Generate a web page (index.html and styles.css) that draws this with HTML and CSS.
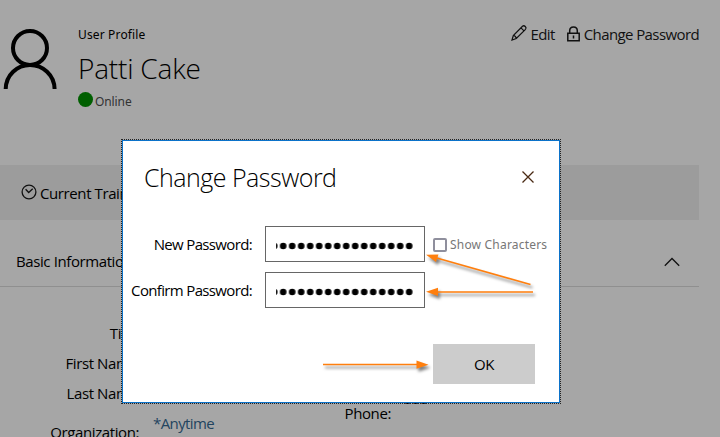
FILE: index.html
```html
<!DOCTYPE html>
<html lang="en">
<head>
<meta charset="utf-8">
<title>User Profile</title>
<link rel="stylesheet" href="styles.css">
</head>
<body>
<main class="page">
  <header class="profile">
    <svg class="avatar" width="60" height="64" viewBox="0 0 60 64" fill="none" stroke="#000" stroke-width="4"><circle cx="30" cy="21" r="17"/><path d="M5.700 62C6 48 17 38 30 38s24.300 10 24.600 24"/></svg>
    <div class="identity">
      <div class="kicker">User Profile</div>
      <h1 class="name">Patti Cake</h1>
      <div class="status"><span class="dot"></span><span class="online">Online</span></div>
    </div>
    <nav class="actions">
      <a class="action"><svg width="18" height="18" viewBox="0 0 18 18" fill="none" stroke="#111" stroke-width="1.200"><path d="M2 16l1.300-4.500L12.500 2.300c1.800-1.600 4.600 1.200 3 3L6.300 14.500zM3.300 11.500c1.500.2 2.700 1.300 3 3M11 3.800l3 3"/></svg><span class="edit">Edit</span></a>
      <a class="action lock"><svg width="13" height="16" viewBox="0 0 13 16" fill="none" stroke="#111" stroke-width="1.500"><path d="M.8 7.200h11.400v7.600H.8zM2.700 7V4.800c0-5 7.600-5 7.600 0V7M6.500 9.500v3"/></svg><span class="change">Change Password</span></a>
    </nav>
  </header>
  <section class="tabbar"><svg width="16" height="16" viewBox="0 0 16 16" fill="none" stroke="#111" stroke-width="1.300"><circle cx="8" cy="8" r="6.900"/><path d="M4.600 5.200L7.700 8.500 11.700 4.800"/></svg><span>Current Training</span></section>
  <section class="section-head"><span>Basic Information</span><svg width="16" height="10" viewBox="0 0 16 10" fill="none" stroke="#111" stroke-width="1.300"><path d="M.8 8.700L8 1.500l7.200 7.200"/></svg></section>
  <section class="details">
    <div class="labels">
      <div>Title:</div><div>First Name:</div><div>Last Name:</div><div class="org">Organization:</div>
    </div>
    <a class="org-link">*Anytime</a>
    <div class="phone">Phone:</div>
    <div class="number">555</div>
  </section>
</main>
<div class="dialog" role="dialog">
  <div class="dialog-head"><h2>Change Password</h2><svg width="12" height="12" viewBox="0 0 12 12" stroke="#4a2a14" stroke-width="1.300"><path d="M.5.500l11 11M11.500.500l-11 11"/></svg></div>
  <div class="row">
    <label>New Password:</label>
    <div class="field"><svg width="138" height="8" viewBox="0 0 138 8"><defs><pattern id="dots" x="2.700" width="9" height="8" patternUnits="userSpaceOnUse"><circle cx="4.500" cy="4" r="3.300"/></pattern></defs><rect width="138" height="8" fill="url(#dots)"/></svg></div>
    <div class="show"><span class="box"></span><span>Show Characters</span></div>
  </div>
  <div class="row">
    <label>Confirm Password:</label>
    <div class="field"><svg width="138" height="8" viewBox="0 0 138 8"><rect width="138" height="8" fill="url(#dots)"/></svg></div>
  </div>
  <button class="ok">OK</button>
</div>
<svg class="arrows" width="720" height="437" viewBox="0 0 720 437">
  <g fill="#ff7f0e" stroke="#ff7f0e" stroke-width="1.700">
    <path d="M435 257.500L530.500 284.500M435 292H533M323 364.500H419"/>
    <path stroke="none" d="M426 254.800L438.500 254.400 436 262zM426 291.700L438 287.700 438 296zM428.500 364.700L416.500 360.500 416.500 368.700z"/>
  </g>
</svg>
</body>
</html>
```

FILE: styles.css
```css
* { box-sizing: border-box; }
body {
  margin: 0;
  width: 720px;
  height: 437px;
  overflow: hidden;
  background: #a6a6a6;
  color: #000;
  font: 15px/20px "Open Sans", "Noto Sans", sans-serif;
  letter-spacing: -0.4px;
  white-space: nowrap;
}
svg { display: block; flex: none; }
h1, h2 { margin: 0; font-weight: 300; }
.page { width: 699px; height: 437px; overflow: hidden; }
.profile { display: flex; height: 165px; padding-top: 24px; }
.avatar { margin-top: 3px; }
.identity { margin-left: 18px; padding-top: 2px; }
.kicker { font: 12px/18px "Noto Sans", sans-serif; letter-spacing: 0.15px; }
.name { margin-top: 6px; font-size: 28px; line-height: 36px; letter-spacing: -0.2px; }
.status { display: flex; margin-top: 6px; }
.dot { width: 15px; height: 15px; border-radius: 50%; background: #005f00; }
.online { margin: 1px 0 0 2px; font: 12px/18px "Noto Sans", sans-serif; letter-spacing: -0.1px; color: #333; }
.actions { display: flex; margin-left: auto; height: 20px; letter-spacing: -0.6px; }
.action { display: flex; color: #111; }
.action svg { margin: 0 2px 0 0; }
.lock { margin-left: 12px; }
.lock svg { margin: 2px 4px 0 0; }
.tabbar { display: flex; align-items: center; gap: 3px; height: 55px; padding-left: 21px; background: #9c9c9c; }
.tabbar svg { margin-top: -2px; }
.section-head { display: flex; align-items: center; justify-content: space-between; height: 67px; padding: 15px 19px 0 16px; border-bottom: 1px solid #8f8f8f; }
.section-head svg { margin-top: 2px; }
.details { display: grid; grid-template-columns: 140px 160px 91px 1fr; height: 150px; }
.labels { display: flex; flex-direction: column; gap: 10px; padding-top: 36px; text-align: right; }
.labels div { margin-right: -1px; }
.labels .org { margin: 9px 1px 0 0; }
.org-link { margin: 126px 0 0 13px; color: #23445f; letter-spacing: -0.6px; }
.phone { margin-top: 116px; text-align: right; }
.number { margin: 101px 0 0 13px; }
.dialog {
  position: absolute;
  left: 122px;
  top: 140px;
  width: 438px;
  height: 263px;
  padding: 21px 0 0 8px;
  background: #fff;
  border: 1px solid #0b72c9;
  outline: 1px dotted #222;
}
.dialog-head { display: flex; justify-content: space-between; height: 64px; padding: 0 25px 0 13px; }
.dialog-head h2 { font-size: 25px; line-height: 30px; letter-spacing: -0.5px; }
.dialog-head svg { margin-top: 9px; }
.row { display: flex; align-items: center; height: 36px; margin-bottom: 10px; letter-spacing: -0.65px; }
.row label { flex: none; width: 121px; margin-right: 13px; text-align: right; }
.field { display: flex; flex: none; align-items: center; width: 160px; height: 36px; padding: 3px 0 0 10px; border: 1px solid #666; }
.show { display: flex; align-items: center; gap: 3px; margin: 2px 0 0 8px; color: #777; font: 12px/18px "Noto Sans", sans-serif; letter-spacing: 0.2px; }
.box { width: 14px; height: 14px; border: 2px solid #8f8f9d; border-radius: 2px; }
.ok { display: block; width: 102px; height: 40px; margin: 36px 0 0 302px; padding: 0; border: 0; background: #ccc; color: #000; font: inherit; letter-spacing: -0.5px; }
.arrows { position: absolute; left: 0; top: 0; pointer-events: none; filter: drop-shadow(2px 3px 1.5px rgba(0, 0, 0, 0.5)); }
```
